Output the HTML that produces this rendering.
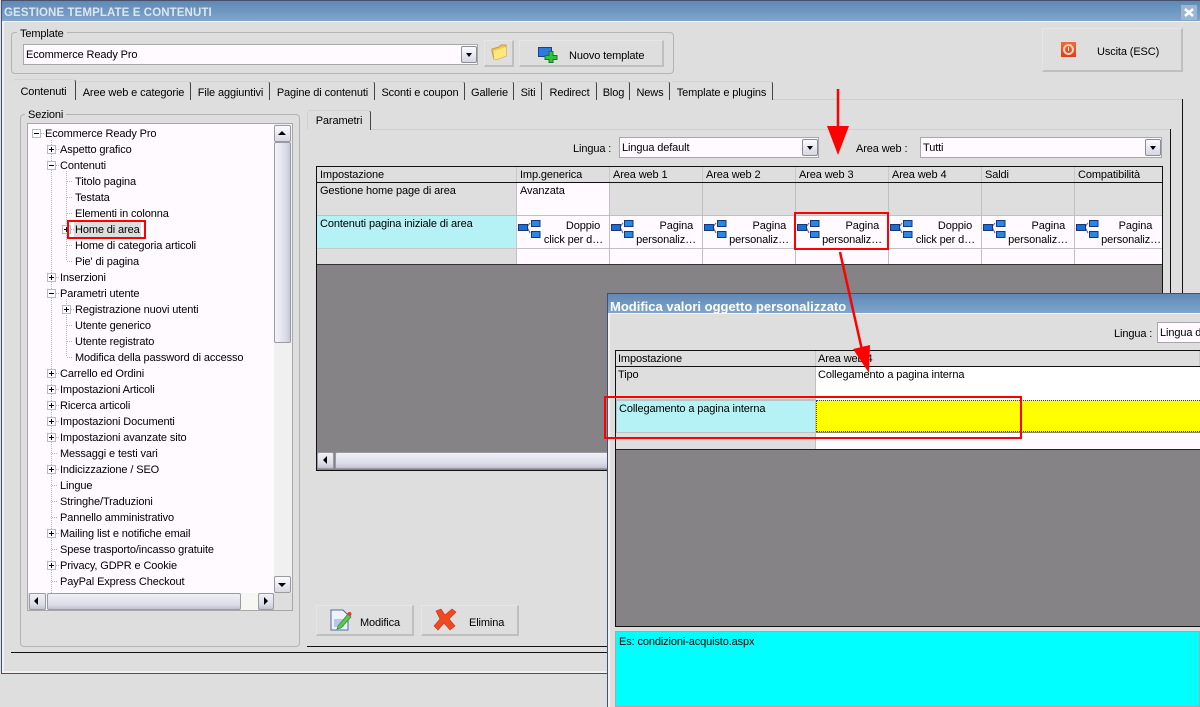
<!DOCTYPE html>
<html><head><meta charset="utf-8"><style>
html,body{margin:0;padding:0;width:1200px;height:707px;overflow:hidden;background:#dedede}
body{position:relative;font:11px "Liberation Sans",sans-serif;letter-spacing:-.12px;color:#000}
div,span.a{position:absolute;box-sizing:border-box}
.t{white-space:nowrap;line-height:13px;height:13px;margin-top:2px}
.tb{background:linear-gradient(#6288b4,#6d97c1 50%,#82a5cb)}
.gb{border:1px solid #b4b4b4;border-radius:4px}
.lg{background:#dedede;padding:0 3px;white-space:nowrap;line-height:13px;margin-top:1px}
.in{background:#fefaff;border:1px solid #a8a8a8;line-height:21px;padding-left:2px;white-space:nowrap;overflow:hidden}
.dd{width:16px;height:17px;background:linear-gradient(#fbfbff,#d6d6e4);border:1px solid #8c8c94;border-radius:2px}
.dd:after{content:"";position:absolute;left:4px;top:6px;border:3px solid transparent;border-top:4px solid #000;border-bottom:0}
.btn{background:#dedede;border:1px solid #cdcdcd;border-bottom:2px solid #bfbfbf;border-right:2px solid #bfbfbf;border-top-color:#e6e6e6;border-left-color:#e6e6e6}
.tab{top:81px;height:19px;border-right:1px solid #444;border-top:1px solid #d2d2d2;border-radius:3px 3px 0 0;line-height:22px;text-align:center;white-space:nowrap}
.c{border-right:1px solid #c0c0c0;border-bottom:1px solid #c0c0c0;line-height:13px;padding:2px 0 0 3px;white-space:nowrap;overflow:hidden}
.h{background:#dedede;border-right:1px solid #c8c8c8;height:15px;top:167px;line-height:16px;padding-left:3px;white-space:nowrap}
.g{background:#dedede}.w{background:#fefaff}
.r{text-align:right;padding:3px 6px 0 0;line-height:14px;top:215px;height:33px;white-space:nowrap}
.tr{white-space:nowrap;line-height:13px;height:15px;padding:0 1px}
.ex{width:9px;height:9px;border:1px solid #b8b8c0;background:#fff}
.ex:before{content:"";position:absolute;left:1px;top:3px;width:5px;height:1px;background:#000}
.p:after{content:"";position:absolute;left:3px;top:1px;width:1px;height:5px;background:#000}
.dh{height:1px;width:6px;background:repeating-linear-gradient(90deg,#b4b4b4 0 1px,transparent 1px 2px)}
.dv{width:1px;background:repeating-linear-gradient(#b4b4b4 0 1px,transparent 1px 2px)}
.sb{background:linear-gradient(90deg,#f4f4fb,#dcdce8 70%,#c8c8d4);border:1px solid #9a9aa2;border-radius:2px}
.sh{background:linear-gradient(#f0f0f8,#dcdce8 70%,#c4c4d0);border:1px solid #9a9aa2;border-radius:2px}
.red{border:2px solid #f00}
svg{position:absolute;overflow:visible}
</style></head><body>
<svg width="0" height="0" style="position:absolute"><defs>
<symbol id="n" viewBox="0 0 23 18"><path d="M9 7L12 3M9 7L12 13" stroke="#5a5a9c" fill="none"/><rect x=".5" y="4.500" width="9" height="6" fill="#1a70d0" stroke="#16367c"/><rect x="13.500" y=".5" width="8.500" height="6" fill="#2a88e4" stroke="#16367c"/><rect x="13.500" y="11.500" width="8.500" height="6" fill="#2a88e4" stroke="#16367c"/></symbol>
</defs></svg>

<!-- main window -->
<div style="left:1px;top:0;width:1199px;height:674px;border:1px solid #44506c;border-width:1px 0 1px 1px;background:#dedede"></div>
<div style="left:2px;top:671px;width:1198px;height:2px;background:#f0f0f0"></div>
<div style="left:2px;top:22px;width:2px;height:650px;background:#f0f0f0"></div>
<div class="tb" style="left:2px;top:1px;width:1198px;height:20px"></div>
<div style="left:2px;top:21px;width:1198px;height:1px;background:#f4f4f4"></div>
<div class="t" style="left:4px;top:7px;margin-top:0;font-size:11.500px;font-weight:bold;letter-spacing:.1px;color:#dce6ee">GESTIONE TEMPLATE E CONTENUTI</div>
<div style="left:1181px;top:5px;width:16px;height:15px;background:#9ab6d2"></div>
<svg style="left:1181px;top:5px" width="16" height="15"><path d="M4 4L12 11M12 4L4 11" stroke="#fff" stroke-width="2.500"/></svg>

<!-- template group -->
<div class="gb" style="left:11px;top:32px;width:663px;height:42px"></div>
<div class="lg" style="left:17px;top:27px">Template</div>
<div class="in" style="left:23px;top:44px;width:455px;height:21px">Ecommerce Ready Pro</div>
<div class="dd" style="left:461px;top:46px"></div>
<div class="btn" style="left:484px;top:40px;width:30px;height:27px"></div>
<svg style="left:491px;top:44px" width="16" height="16"><path d="M1 5L8 3L10 1L15 1V12L7 15H3L1 7Z" fill="#f4c850" stroke="#c89848"/><path d="M3 7L15 3V12L7 15H3Z" fill="#ffe878"/></svg>
<div class="btn" style="left:519px;top:40px;width:145px;height:27px"></div>
<svg style="left:538px;top:47px" width="20" height="16"><rect x=".5" y=".5" width="13" height="9" fill="#2a7ae0" stroke="#1c3f8c"/><path d="M12 5h4v4h4v4h-4v3h-4v-3H8V9h4Z" transform="translate(-1 -.5)" fill="#2fc23a" stroke="#1a7a24"/></svg>
<div class="t" style="left:569px;top:48px">Nuovo template</div>
<div class="btn" style="left:1042px;top:28px;width:141px;height:44px"></div>
<div style="left:1060px;top:41px;width:17px;height:17px;background:linear-gradient(#ee6a3a,#d8401e);border:1px solid #f4d8c8"></div>
<svg style="left:1060px;top:41px" width="17" height="17"><circle cx="8.500" cy="8.500" r="4.500" fill="none" stroke="#fbd0c0" stroke-width="2"/><path d="M8.500 6V10" stroke="#fbe8e0"/></svg>
<div class="t" style="left:1097px;top:44px">Uscita (ESC)</div>

<!-- tabs -->
<div style="left:772px;top:99px;width:410px;height:1px;background:#cfcfcf"></div>
<div style="left:1182px;top:99px;width:1px;height:554px;background:#111"></div>
<div style="left:11px;top:652px;width:1172px;height:1px;background:#111"></div>
<div class="tab" style="left:12px;width:64px;top:79px;height:21px;line-height:24px;background:#dedede">Contenuti</div>
<div class="tab" style="left:77px;width:114px">Aree web e categorie</div>
<div class="tab" style="left:192px;width:78px">File aggiuntivi</div>
<div class="tab" style="left:271px;width:104px">Pagine di contenuti</div>
<div class="tab" style="left:376px;width:89px">Sconti e coupon</div>
<div class="tab" style="left:466px;width:48px">Gallerie</div>
<div class="tab" style="left:515px;width:27px">Siti</div>
<div class="tab" style="left:543px;width:54px">Redirect</div>
<div class="tab" style="left:598px;width:32px">Blog</div>
<div class="tab" style="left:631px;width:39px">News</div>
<div class="tab" style="left:671px;width:102px">Template e plugins</div>

<!-- sezioni -->
<div class="gb" style="left:20px;top:114px;width:280px;height:533px"></div>
<div class="lg" style="left:25px;top:108px">Sezioni</div>
<div style="left:27px;top:123px;width:266px;height:488px;background:#fefaff;border:1px solid #a8a8a8;overflow:hidden"></div>
<div class="dv" style="left:51px;top:140px;height:455px"></div>
<div class="dv" style="left:66px;top:171px;height:90px"></div>
<div class="dv" style="left:66px;top:299px;height:58px"></div>
<div id="tree">
<div class="ex" style="left:32px;top:129px"></div><div class="dh" style="left:41px;top:133px;width:4px"></div><div class="t tr" style="left:44px;top:126px">Ecommerce Ready Pro</div>
<div class="ex p" style="left:47px;top:145px"></div><div class="dh" style="left:56px;top:149px;width:4px"></div><div class="t tr" style="left:59px;top:142px">Aspetto grafico</div>
<div class="ex" style="left:47px;top:161px"></div><div class="dh" style="left:56px;top:165px;width:4px"></div><div class="t tr" style="left:59px;top:158px">Contenuti</div>
<div class="dh" style="left:67px;top:181px"></div><div class="t tr" style="left:74px;top:174px">Titolo pagina</div>
<div class="dh" style="left:67px;top:197px"></div><div class="t tr" style="left:74px;top:190px">Testata</div>
<div class="dh" style="left:67px;top:213px"></div><div class="t tr" style="left:74px;top:206px">Elementi in colonna</div>
<div class="ex p" style="left:62px;top:225px"></div><div class="dh" style="left:71px;top:229px;width:3px"></div><div style="left:74px;top:222px;width:67px;height:15px;background:#dedede"></div><div class="t tr" style="left:74px;top:222px">Home di area</div>
<div class="dh" style="left:67px;top:245px"></div><div class="t tr" style="left:74px;top:238px">Home di categoria articoli</div>
<div class="dh" style="left:67px;top:261px"></div><div class="t tr" style="left:74px;top:254px">Pie' di pagina</div>
<div class="ex p" style="left:47px;top:273px"></div><div class="dh" style="left:56px;top:277px;width:4px"></div><div class="t tr" style="left:59px;top:270px">Inserzioni</div>
<div class="ex" style="left:47px;top:289px"></div><div class="dh" style="left:56px;top:293px;width:4px"></div><div class="t tr" style="left:59px;top:286px">Parametri utente</div>
<div class="ex p" style="left:62px;top:305px"></div><div class="dh" style="left:71px;top:309px;width:3px"></div><div class="t tr" style="left:74px;top:302px">Registrazione nuovi utenti</div>
<div class="dh" style="left:67px;top:325px"></div><div class="t tr" style="left:74px;top:318px">Utente generico</div>
<div class="dh" style="left:67px;top:341px"></div><div class="t tr" style="left:74px;top:334px">Utente registrato</div>
<div class="dh" style="left:67px;top:357px"></div><div class="t tr" style="left:74px;top:350px">Modifica della password di accesso</div>
<div class="ex p" style="left:47px;top:369px"></div><div class="dh" style="left:56px;top:373px;width:4px"></div><div class="t tr" style="left:59px;top:366px">Carrello ed Ordini</div>
<div class="ex p" style="left:47px;top:385px"></div><div class="dh" style="left:56px;top:389px;width:4px"></div><div class="t tr" style="left:59px;top:382px">Impostazioni Articoli</div>
<div class="ex p" style="left:47px;top:401px"></div><div class="dh" style="left:56px;top:405px;width:4px"></div><div class="t tr" style="left:59px;top:398px">Ricerca articoli</div>
<div class="ex p" style="left:47px;top:417px"></div><div class="dh" style="left:56px;top:421px;width:4px"></div><div class="t tr" style="left:59px;top:414px">Impostazioni Documenti</div>
<div class="ex p" style="left:47px;top:433px"></div><div class="dh" style="left:56px;top:437px;width:4px"></div><div class="t tr" style="left:59px;top:430px">Impostazioni avanzate sito</div>
<div class="dh" style="left:52px;top:453px"></div><div class="t tr" style="left:59px;top:446px">Messaggi e testi vari</div>
<div class="ex p" style="left:47px;top:465px"></div><div class="dh" style="left:56px;top:469px;width:4px"></div><div class="t tr" style="left:59px;top:462px">Indicizzazione / SEO</div>
<div class="dh" style="left:52px;top:485px"></div><div class="t tr" style="left:59px;top:478px">Lingue</div>
<div class="dh" style="left:52px;top:501px"></div><div class="t tr" style="left:59px;top:494px">Stringhe/Traduzioni</div>
<div class="dh" style="left:52px;top:517px"></div><div class="t tr" style="left:59px;top:510px">Pannello amministrativo</div>
<div class="ex p" style="left:47px;top:529px"></div><div class="dh" style="left:56px;top:533px;width:4px"></div><div class="t tr" style="left:59px;top:526px">Mailing list e notifiche email</div>
<div class="dh" style="left:52px;top:549px"></div><div class="t tr" style="left:59px;top:542px">Spese trasporto/incasso gratuite</div>
<div class="ex p" style="left:47px;top:561px"></div><div class="dh" style="left:56px;top:565px;width:4px"></div><div class="t tr" style="left:59px;top:558px">Privacy, GDPR e Cookie</div>
<div class="dh" style="left:52px;top:581px"></div><div class="t tr" style="left:59px;top:574px">PayPal Express Checkout</div>
</div>
<!-- tree scrollbars -->
<div style="left:274px;top:124px;width:18px;height:469px;background:#f0f0f0"></div>
<div class="sb" style="left:274px;top:125px;width:17px;height:17px;background:linear-gradient(#fbfbff,#d8d8e4)"></div>
<div style="left:278px;top:131px;border:4px solid transparent;border-bottom:4px solid #000;border-top:0"></div>
<div class="sb" style="left:274px;top:142px;width:17px;height:201px"></div>
<div class="sb" style="left:274px;top:576px;width:17px;height:17px;background:linear-gradient(#fbfbff,#d8d8e4)"></div>
<div style="left:278px;top:583px;border:4px solid transparent;border-top:4px solid #000;border-bottom:0"></div>
<div style="left:28px;top:593px;width:264px;height:17px;background:#dedede"></div>
<div style="left:46px;top:593px;width:212px;height:17px;background:#f6f6f2"></div>
<div class="sh" style="left:29px;top:593px;width:17px;height:17px"></div>
<div style="left:34px;top:597px;border:4px solid transparent;border-right:4px solid #000;border-left:0"></div>
<div class="sh" style="left:47px;top:593px;width:194px;height:17px"></div>
<div class="sh" style="left:258px;top:593px;width:16px;height:17px"></div>
<div style="left:264px;top:597px;border:4px solid transparent;border-left:4px solid #000;border-right:0"></div>

<!-- right panel -->
<div style="left:307px;top:129px;width:863px;height:1px;background:#cfcfcf"></div>
<div style="left:1170px;top:129px;width:1px;height:518px;background:#111"></div>
<div style="left:307px;top:646px;width:864px;height:1px;background:#111"></div>
<div class="tab" style="left:307px;top:110px;width:64px;height:20px;line-height:21px;background:#dedede;border-left:1px solid #d0d0d0">Parametri</div>
<div class="t" style="left:573px;top:141px">Lingua :</div>
<div class="in" style="left:619px;top:137px;width:200px;height:21px">Lingua default</div>
<div class="dd" style="left:802px;top:139px"></div>
<div class="t" style="left:856px;top:141px">Area web :</div>
<div class="in" style="left:920px;top:137px;width:242px;height:21px">Tutti</div>
<div class="dd" style="left:1145px;top:139px"></div>

<!-- grid -->
<div style="left:316px;top:166px;width:847px;height:305px;background:#858385;border:1px solid #111"></div>
<div style="left:317px;top:182px;width:845px;height:1px;background:#111"></div>
<div class="h" style="left:317px;width:200px">Impostazione</div>
<div class="h" style="left:517px;width:93px">Imp.generica</div>
<div class="h" style="left:610px;width:93px">Area web 1</div>
<div class="h" style="left:703px;width:93px">Area web 2</div>
<div class="h" style="left:796px;width:93px">Area web 3</div>
<div class="h" style="left:889px;width:93px">Area web 4</div>
<div class="h" style="left:982px;width:93px">Saldi</div>
<div class="h" style="left:1075px;width:87px;border-right:0">Compatibilità</div>

<div class="c g" style="left:317px;top:183px;width:200px;height:33px">Gestione home page di area</div>
<div class="c w" style="left:517px;top:183px;width:93px;height:33px">Avanzata</div>
<div class="c g" style="left:610px;top:183px;width:93px;height:33px"></div>
<div class="c g" style="left:703px;top:183px;width:93px;height:33px"></div>
<div class="c g" style="left:796px;top:183px;width:93px;height:33px"></div>
<div class="c g" style="left:889px;top:183px;width:93px;height:33px"></div>
<div class="c g" style="left:982px;top:183px;width:93px;height:33px"></div>
<div class="c g" style="left:1075px;top:183px;width:87px;height:33px;border-right:0"></div>

<div class="c" style="left:317px;top:216px;width:200px;height:33px;background:#b5f2f5;border-bottom:1px solid #c8c8c8;border-right:1px solid #c8c8c8;padding-left:3px">Contenuti pagina iniziale di area</div>
<div class="c w r" style="left:517px;width:93px;top:216px">Doppio&nbsp;<br>click per d…</div>
<div class="c w r" style="left:610px;width:93px;top:216px">Pagina&nbsp;<br>personaliz…</div>
<div class="c w r" style="left:703px;width:93px;top:216px">Pagina&nbsp;<br>personaliz…</div>
<div class="c w r" style="left:796px;width:93px;top:216px">Pagina&nbsp;<br>personaliz…</div>
<div class="c w r" style="left:889px;width:93px;top:216px">Doppio&nbsp;<br>click per d…</div>
<div class="c w r" style="left:982px;width:93px;top:216px">Pagina&nbsp;<br>personaliz…</div>
<div class="c w r" style="left:1075px;width:87px;top:216px;border-right:0;padding-right:1px">Pagina&nbsp;&nbsp;&nbsp;<br>personaliz…</div>
<svg style="left:518px;top:220px" width="23" height="18"><use href="#n"/></svg>
<svg style="left:611px;top:220px" width="23" height="18"><use href="#n"/></svg>
<svg style="left:704px;top:220px" width="23" height="18"><use href="#n"/></svg>
<svg style="left:797px;top:220px" width="23" height="18"><use href="#n"/></svg>
<svg style="left:890px;top:220px" width="23" height="18"><use href="#n"/></svg>
<svg style="left:983px;top:220px" width="23" height="18"><use href="#n"/></svg>
<svg style="left:1076px;top:220px" width="23" height="18"><use href="#n"/></svg>

<div class="c g" style="left:317px;top:249px;width:200px;height:16px"></div>
<div class="c w" style="left:517px;top:249px;width:93px;height:16px"></div>
<div class="c w" style="left:610px;top:249px;width:93px;height:16px"></div>
<div class="c w" style="left:703px;top:249px;width:93px;height:16px"></div>
<div class="c w" style="left:796px;top:249px;width:93px;height:16px"></div>
<div class="c w" style="left:889px;top:249px;width:93px;height:16px"></div>
<div class="c w" style="left:982px;top:249px;width:93px;height:16px"></div>
<div class="c w" style="left:1075px;top:249px;width:87px;height:16px;border-right:0"></div>
<div style="left:317px;top:264px;width:845px;height:1px;background:#333"></div>
<!-- grid hscroll -->
<div class="sh" style="left:317px;top:452px;width:17px;height:17px"></div>
<div style="left:323px;top:456px;border:4px solid transparent;border-right:4px solid #000;border-left:0"></div>
<div class="sh" style="left:335px;top:452px;width:300px;height:17px"></div>

<!-- bottom buttons -->
<div class="btn" style="left:316px;top:605px;width:98px;height:31px"></div>
<svg style="left:329px;top:608px" width="24" height="24"><path d="M2 2H14L19 7V22H2Z" fill="#eef2fb" stroke="#4a6aa8"/><path d="M5 11h10v8H5Z" fill="#b4c8ec"/><path d="M9 18L19 6l3 3L12 20L8 21Z" fill="#5cc84c" stroke="#2f8a30" stroke-width=".7"/><circle cx="20.500" cy="6" r="2" fill="#e83a30"/></svg>
<div class="t" style="left:360px;top:615px">Modifica</div>
<div class="btn" style="left:421px;top:605px;width:98px;height:31px"></div>
<svg style="left:433px;top:608px" width="24" height="24"><path d="M3 3L8 1L12 7L19 1L23 4L16 11L22 18L17 22L11 15L5 22L1 18L7 11Z" fill="#f04a20" stroke="#c8301c" stroke-width=".6"/></svg>
<div class="t" style="left:469px;top:615px">Elimina</div>

<!-- modal -->
<div style="left:607px;top:293px;width:593px;height:414px;background:#dedede;border-left:1px solid #44506c;border-top:1px solid #44506c"></div>
<div style="left:608px;top:314px;width:2px;height:393px;background:#f0f0f0"></div>
<div class="tb" style="left:608px;top:294px;width:592px;height:19px"></div>
<div style="left:608px;top:313px;width:592px;height:1px;background:#f4f4f4"></div>
<div class="t" style="left:610px;top:300px;margin-top:0;font-size:13px;font-weight:bold;letter-spacing:0;color:#fff">Modifica valori oggetto personalizzato</div>
<div class="t" style="left:1114px;top:326px">Lingua :</div>
<div class="in" style="left:1157px;top:322px;width:60px;height:21px">Lingua default</div>
<div style="left:615px;top:350px;width:600px;height:277px;background:#858385;border:1px solid #111"></div>
<div style="left:616px;top:366px;width:584px;height:1px;background:#111"></div>
<div class="h" style="left:616px;top:351px;width:200px;padding-left:2px">Impostazione</div>
<div class="h" style="left:816px;top:351px;width:384px;padding-left:2px">Area web 4</div>
<div class="c g" style="left:616px;top:367px;width:200px;height:33px;padding-left:2px">Tipo</div>
<div class="c" style="left:816px;top:367px;width:384px;height:33px;background:#fff;border:0;padding-left:2px">Collegamento a pagina interna</div>
<div class="c" style="left:616px;top:400px;width:200px;height:33px;background:#b5f2f5;border:1px solid #c0c0c0;padding-left:2px">Collegamento a pagina interna</div>
<div style="left:816px;top:400px;width:384px;height:32px;background:#ff0;border:1px dotted #2b3bb8;border-right:0"></div>
<div class="g" style="left:616px;top:433px;width:200px;height:16px;border-right:1px solid #c0c0c0"></div>
<div class="w" style="left:816px;top:433px;width:384px;height:16px"></div>
<div style="left:616px;top:449px;width:584px;height:1px;background:#222"></div>
<div style="left:615px;top:631px;width:585px;height:76px;background:#0ff;border:1px solid #a8a8a8;padding:4px 0 0 3px;line-height:13px">Es: condizioni-acquisto.aspx</div>

<!-- annotations -->
<div class="red" style="left:67px;top:220px;width:79px;height:19px"></div>
<div class="red" style="left:794px;top:212px;width:95px;height:38px"></div>
<div class="red" style="left:604px;top:396px;width:418px;height:43px"></div>
<svg style="left:0;top:0" width="1200" height="707">
<path d="M838 89V128" stroke="#f00" stroke-width="2.500"/><path d="M827 126H849L838 155Z" fill="#f00"/>
<path d="M840 252L862 350" stroke="#f00" stroke-width="2.500"/><path d="M853 349L870 345L869 373Z" fill="#f00"/>
</svg>
</body></html>
